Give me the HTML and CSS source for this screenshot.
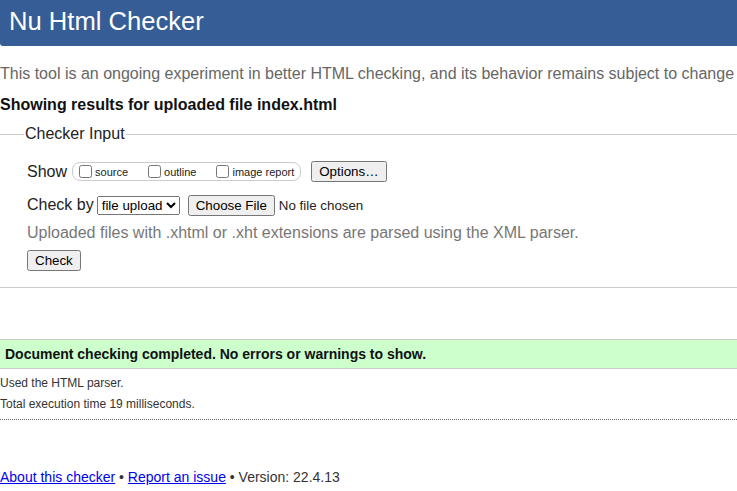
FILE: index.html
```html
<!DOCTYPE html>
<html lang="en">
<head>
<meta charset="utf-8">
<title>Nu Html Checker</title>
<link rel="stylesheet" href="styles.css">
</head>
<body>
<h1 class="title">Nu Html Checker</h1>
<p class="intro">This tool is an ongoing experiment in better HTML checking, and its behavior remains subject to change</p>
<p class="showing">Showing results for uploaded file index.html</p>
<fieldset class="input">
  <legend class="legend">Checker Input</legend>
  <div class="row row-show">
    <span class="label">Show</span>
    <span class="showbox">
      <label class="opt"><input type="checkbox">source</label>
      <label class="opt"><input type="checkbox">outline</label>
      <label class="opt last"><input type="checkbox">image report</label>
    </span>
    <button class="btn-options" type="button">Options…</button>
  </div>
  <div class="row row-by">
    <span class="label">Check by</span>
    <select class="sel"><option>file upload</option></select>
    <input class="file" type="file">
  </div>
  <p class="note">Uploaded files with .xhtml or .xht extensions are parsed using the XML parser.</p>
  <div class="row row-check"><button class="btn-check" type="button">Check</button></div>
</fieldset>
<p class="success">Document checking completed. No errors or warnings to show.</p>
<p class="details">Used the HTML parser.</p>
<p class="details details-last">Total execution time 19 milliseconds.</p>
<p class="footer"><a href="#">About this checker</a> • <a href="#">Report an issue</a> • Version: 22.4.13</p>
</body>
</html>
```
FILE: styles.css
```css
html, body {
  margin: 0;
  padding: 0;
  background: #fff;
}
body {
  font-family: "Liberation Sans", Arial, sans-serif;
  color: #222;
  font-size: 16px;
}
.title {
  margin: 0;
  height: 46px;
  box-sizing: border-box;
  padding: 6px 0 0 9px;
  background: #365d95;
  color: #fff;
  font-weight: normal;
  font-size: 25.6px;
  line-height: 30px;
  border-bottom-left-radius: 3px;
}
.intro {
  margin: 19px 0 0 0;
  line-height: 18px;
  color: #666;
  white-space: nowrap;
}
.showing {
  margin: 13px 0 0 0;
  line-height: 18px;
  font-weight: bold;
  color: #111;
}
.input {
  margin: 11px 0 0 0;
  padding: 0 0 16px 27px;
  border: none;
  border-top: 1px solid #ccc;
  border-bottom: 1px solid #ccc;
  min-width: 0;
}
.legend {
  margin-left: -3px;
  padding: 0 1px;
  line-height: 18px;
  color: #222;
}
.row {
  display: flex;
  align-items: center;
}
.row-show {
  margin-top: 18px;
  height: 21px;
}
.row-by {
  margin-top: 12px;
  height: 22px;
}
.label {
  line-height: 18px;
}
.showbox {
  display: inline-flex;
  align-items: center;
  margin-left: 5px;
  height: 17px;
  padding: 0 6px 0 2px;
  border: 1px solid #ccc;
  border-radius: 8px;
  font-size: 11px;
}
.opt {
  display: inline-flex;
  align-items: center;
  margin-right: 16px;
}
.opt input {
  margin: 0 3px 0 4px;
}
.opt.last {
  margin-right: 0;
}
.btn-options {
  margin-left: 10px;
  font-family: "Liberation Sans", Arial, sans-serif;
  font-size: 13.33px;
}
.sel {
  margin-left: 3px;
  font-family: "Liberation Sans", Arial, sans-serif;
  font-size: 13.33px;
}
.file {
  margin-left: 8px;
  font-family: "Liberation Sans", Arial, sans-serif;
  font-size: 13.33px;
}
.note {
  margin: 8px 0 0 0;
  line-height: 18px;
  color: #777;
}
.row-check {
  margin-top: 8px;
}
.btn-check {
  font-family: "Liberation Sans", Arial, sans-serif;
  font-size: 13.33px;
}
.success {
  margin: 51px 0 0 0;
  height: 28px;
  padding: 0 0 0 5px;
  line-height: 28px;
  background: #ccffcc;
  border-top: 1px solid #ccc;
  border-bottom: 1px solid #ccc;
  font-size: 14px;
  font-weight: bold;
  color: #111;
}
.details {
  margin: 7px 0 0 0;
  font-size: 12px;
  line-height: 14px;
  color: #333;
}
.details + .details {
  margin-top: 7px;
}
.details-last {
  padding-bottom: 8px;
  border-bottom: 1px dotted #666;
}
.footer {
  margin: 49px 0 0 0;
  font-size: 14px;
  line-height: 16px;
  color: #333;
}
.footer a {
  color: #00e;
}
```
